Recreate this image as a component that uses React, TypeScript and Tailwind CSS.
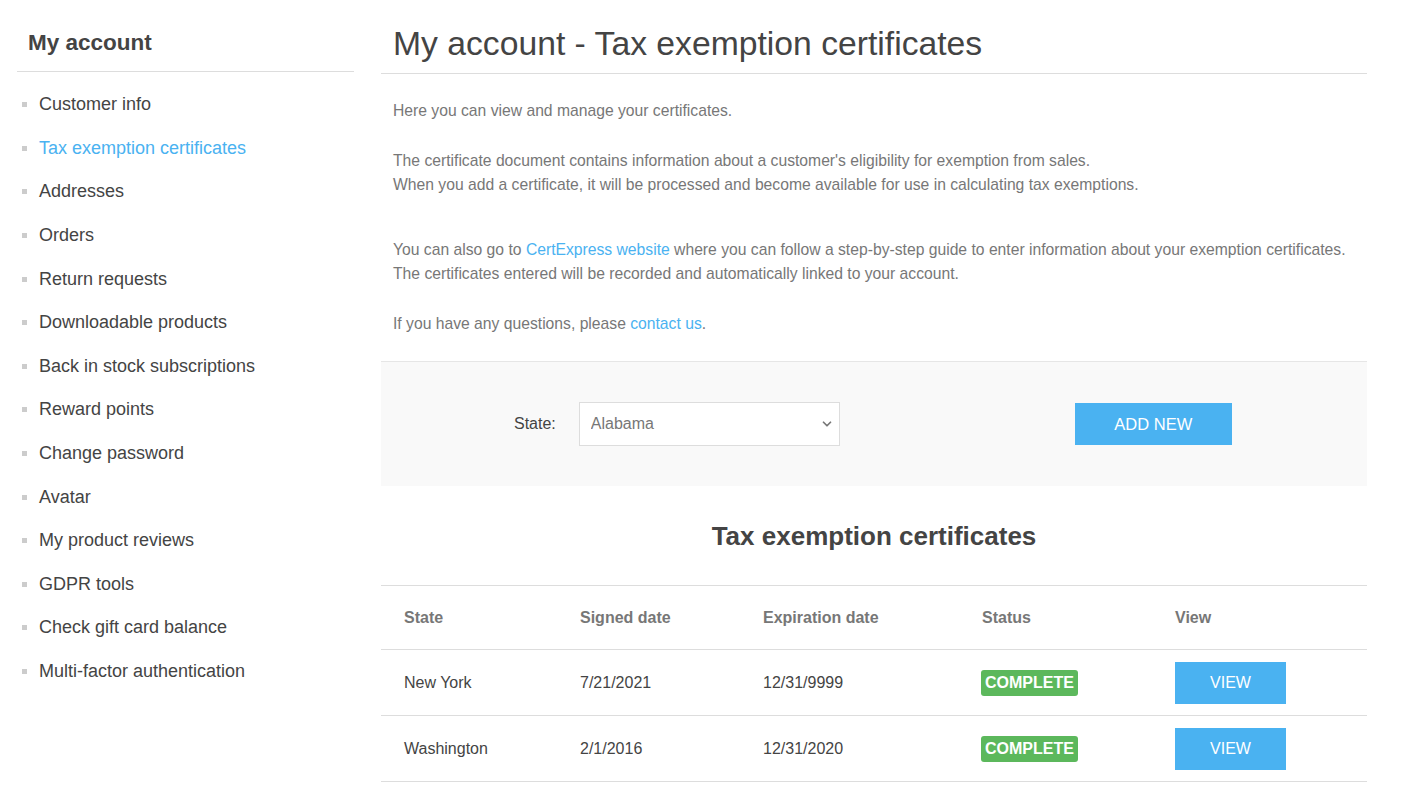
import { ChevronDown } from "lucide-react";

const menuItems = [
  "Customer info",
  "Tax exemption certificates",
  "Addresses",
  "Orders",
  "Return requests",
  "Downloadable products",
  "Back in stock subscriptions",
  "Reward points",
  "Change password",
  "Avatar",
  "My product reviews",
  "GDPR tools",
  "Check gift card balance",
  "Multi-factor authentication",
];

const certificates = [
  { state: "New York", signed: "7/21/2021", expires: "12/31/9999", status: "Complete" },
  { state: "Washington", signed: "2/1/2016", expires: "12/31/2020", status: "Complete" },
];

function Sidebar() {
  return (
    <aside className="w-[337px] shrink-0">
      <div className="border-b border-[#ddd] px-[11px] pt-[28px] pb-[13px]">
        <h2 className="text-[22.5px] font-bold leading-[30px] text-[#444]">My account</h2>
      </div>
      <ul className="pt-[11px]">
        {menuItems.map((item) => {
          const active = item === "Tax exemption certificates";
          return (
            <li key={item} className="flex h-[43.6px] items-center">
              <span className="ml-[5px] mr-[12px] size-[5px] bg-[#ccc]" />
              <a
                href="#"
                className={
                  active
                    ? "text-[18px] text-[#4ab2f1]"
                    : "text-[18px] text-[#444]"
                }
              >
                {item}
              </a>
            </li>
          );
        })}
      </ul>
    </aside>
  );
}

function CertificatesTable() {
  return (
    <div className="border-t border-[#ddd]">
      <div className="grid h-[64px] grid-cols-[176px_183px_219px_193px_1fr] items-center border-b border-[#ddd] pl-[23px] text-[16px] font-bold text-[#777]">
        <div>State</div>
        <div>Signed date</div>
        <div>Expiration date</div>
        <div>Status</div>
        <div>View</div>
      </div>
      {certificates.map((cert) => (
        <div
          key={cert.state}
          className="grid h-[66px] grid-cols-[176px_183px_219px_193px_1fr] items-center border-b border-[#ddd] pl-[23px] text-[16px] text-[#444]"
        >
          <div>{cert.state}</div>
          <div>{cert.signed}</div>
          <div>{cert.expires}</div>
          <div className="-ml-px">
            <span className="inline-block rounded-[3px] bg-[#5cb85c] px-[4px] text-[16px] leading-[26px] font-bold text-white uppercase">
              {cert.status}
            </span>
          </div>
          <div>
            <button className="h-[42px] w-[111px] bg-[#4ab2f1] text-[16px] text-white uppercase">
              View
            </button>
          </div>
        </div>
      ))}
    </div>
  );
}

export default function App() {
  return (
    <div className="flex gap-[27px] bg-white pl-[17px] font-['Liberation_Sans',Arial,sans-serif]">
      <Sidebar />
      <main className="w-[986px] shrink-0 pb-[8px]">
        <div className="border-b border-[#ddd] px-[12px] pt-[23px] pb-[10px]">
          <h1 className="text-[33.7px] leading-[40px] text-[#444]">
            My account - Tax exemption certificates
          </h1>
        </div>
        <div className="px-[12px] pt-[25px] pb-[25px] text-[15.7px] leading-[24px] text-[#777]">
          <p>Here you can view and manage your certificates.</p>
          <p className="mt-[26px]">
            The certificate document contains information about a customer's eligibility for exemption from sales.
            <br />
            When you add a certificate, it will be processed and become available for use in calculating tax exemptions.
          </p>
          <p className="mt-[41px]">
            You can also go to{" "}
            <a href="#" className="text-[#4ab2f1]">
              CertExpress website
            </a>{" "}
            where you can follow a step-by-step guide to enter information about your exemption certificates.
            <br />
            The certificates entered will be recorded and automatically linked to your account.
          </p>
          <p className="mt-[26px]">
            If you have any questions, please{" "}
            <a href="#" className="text-[#4ab2f1]">
              contact us
            </a>
            .
          </p>
        </div>

        <div className="flex h-[125px] items-center border-t border-[#e6e6e6] bg-[#f9f9f9]">
          <div className="flex items-center pl-[133px]">
            <label className="mr-[23px] text-[16px] text-[#444]">State:</label>
            <div className="relative">
              <select className="h-[44px] w-[261px] appearance-none border border-[#ddd] bg-white pl-[11px] text-[16px] text-[#777] outline-none">
                <option>Alabama</option>
              </select>
              <ChevronDown
                className="pointer-events-none absolute top-1/2 right-[6px] size-[14px] -translate-y-1/2 text-[#777]"
                strokeWidth={3}
              />
            </div>
          </div>
          <button className="ml-[235px] h-[42px] w-[157px] bg-[#4ab2f1] text-[16.5px] text-white uppercase">
            Add new
          </button>
        </div>

        <h2 className="pt-[34px] pb-[33px] text-center text-[26px] leading-[32px] font-bold text-[#444]">
          Tax exemption certificates
        </h2>

        <CertificatesTable />
      </main>
    </div>
  );
}
